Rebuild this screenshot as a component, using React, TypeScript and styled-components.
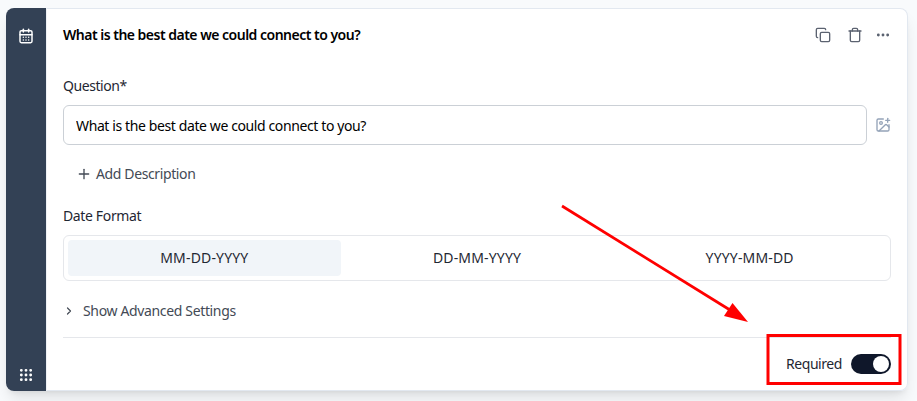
import React, { useState } from "react";
import styled, { createGlobalStyle } from "styled-components";
import { Copy, Trash, Ellipsis, ImagePlus, Plus, ChevronRight, Grip, CalendarDays } from "lucide-react";

const GlobalStyle = createGlobalStyle`
  * { box-sizing: border-box; }
  body {
    margin: 0;
    background: #f8fafc;
    font-family: "Noto Sans", sans-serif;
    font-size: 14px;
    line-height: 20px;
    color: #1f2733;
    overflow: hidden;
  }
  button, input { font: inherit; color: inherit; letter-spacing: inherit; }
`;

const Page = styled.main`
  position: relative;
  width: 917px;
  height: 401px;
  padding: 8px 9px 10px 6px;
`;

const Card = styled.section`
  display: flex;
  width: 902px;
  height: 383px;
  border-radius: 8px;
  box-shadow: 0 10px 15px -3px rgba(0, 0, 0, 0.1), 0 4px 6px -4px rgba(0, 0, 0, 0.1);
`;

const Rail = styled.aside`
  display: flex;
  flex-direction: column;
  align-items: center;
  justify-content: space-between;
  width: 40px;
  padding: 20px 0 8px;
  border-radius: 8px 0 0 8px;
  background: #334155;
  color: #fff;
  svg { display: block; }
`;

const Body = styled.div`
  flex: 1;
  display: flex;
  flex-direction: column;
  padding: 0 16px;
  border: 1px solid #e2e8f0;
  border-left-color: #eef1f5;
  border-radius: 0 8px 8px 0;
  background: #fff;
`;

const Header = styled.header`
  display: flex;
  align-items: center;
  justify-content: space-between;
  height: 52px;
`;

const Title = styled.h3`
  margin: 0;
  font-size: 14px;
  font-weight: 600;
  color: #000;
  letter-spacing: -0.51px;
`;

const Actions = styled.div`
  display: flex;
  align-items: center;
  gap: 16px;
  color: #5b6270;
  svg { display: block; }
  svg:last-child { margin-left: -4px; }
`;

const Label = styled.label<{ $track: number; $top: number }>`
  margin-top: ${(p) => p.$top}px;
  height: 20px;
  white-space: nowrap;
  letter-spacing: ${(p) => p.$track}px;
`;

const InputRow = styled.div`
  display: flex;
  align-items: center;
  gap: 8px;
  height: 40px;
  margin-top: 9px;
  color: #94a3b8;
`;

const TextInput = styled.input`
  width: 804px;
  height: 40px;
  padding: 0 12px;
  border: 1px solid #cbd0d6;
  border-radius: 6px;
  outline: none;
  background: #fff;
  color: #000;
  letter-spacing: -0.39px;
`;

const TextButton = styled.button<{ $top: number; $left: number; $gap: number; $track: number }>`
  display: flex;
  align-items: center;
  align-self: flex-start;
  gap: ${(p) => p.$gap}px;
  height: 20px;
  margin: ${(p) => p.$top}px 0 0 ${(p) => p.$left}px;
  padding: 0;
  border: 0;
  background: none;
  color: #434a55;
  letter-spacing: ${(p) => p.$track}px;
`;

const Segments = styled.div`
  display: grid;
  grid-template-columns: repeat(3, 1fr);
  width: 828px;
  height: 46px;
  margin-top: 9px;
  padding: 4px;
  border: 1px solid #e5e7eb;
  border-radius: 6px;
  letter-spacing: 0.16px;
`;

const Segment = styled.button<{ $active: boolean }>`
  padding: 0;
  border: 0;
  border-radius: 4px;
  background: ${(p) => (p.$active ? "#f1f5f9" : "transparent")};
`;

const Footer = styled.footer`
  display: flex;
  align-items: center;
  justify-content: flex-end;
  gap: 9px;
  width: 828px;
  height: 53px;
  margin-top: 16px;
  border-top: 1px solid #e5e7eb;
`;

const Toggle = styled.button<{ $on: boolean }>`
  display: flex;
  justify-content: ${(p) => (p.$on ? "flex-end" : "flex-start")};
  width: 40px;
  height: 20px;
  padding: 2px;
  border: 0;
  border-radius: 10px;
  background: ${(p) => (p.$on ? "#0f172a" : "#cbd5e1")};
`;

const Knob = styled.span`
  width: 16px;
  height: 16px;
  border-radius: 50%;
  background: #fff;
`;

const Annotation = styled.svg`
  position: absolute;
  inset: 0;
  pointer-events: none;
`;

const formats = ["MM-DD-YYYY", "DD-MM-YYYY", "YYYY-MM-DD"];

export default function App() {
  const [format, setFormat] = useState(formats[0]);
  const [required, setRequired] = useState(true);
  const [question, setQuestion] = useState("What is the best date we could connect to you?");
  return (
    <Page>
      <GlobalStyle />
      <Card>
        <Rail>
          <CalendarDays size={16} strokeWidth={2.2} />
          <Grip size={16} strokeWidth={2.3} />
        </Rail>
        <Body>
          <Header>
            <Title>{question}</Title>
            <Actions>
              <Copy size={16} strokeWidth={2} />
              <Trash size={16} strokeWidth={2} />
              <Ellipsis size={16} strokeWidth={2.3} />
            </Actions>
          </Header>
          <Label $top={15} $track={-0.43}>Question*</Label>
          <InputRow>
            <TextInput value={question} onChange={(e) => setQuestion(e.target.value)} />
            <ImagePlus size={16} strokeWidth={2} />
          </InputRow>
          <TextButton $top={19} $left={13} $gap={4} $track={-0.38}>
            <Plus size={16} strokeWidth={2} />
            Add Description
          </TextButton>
          <Label $top={22} $track={-0.36}>Date Format</Label>
          <Segments>
            {formats.map((f) => (
              <Segment key={f} $active={f === format} onClick={() => setFormat(f)}>{f}</Segment>
            ))}
          </Segments>
          <TextButton $top={20} $left={0} $gap={8} $track={-0.35}>
            <ChevronRight size={12} strokeWidth={2.4} />
            Show Advanced Settings
          </TextButton>
          <Footer>
            <Label $top={0} $track={-0.43}>Required</Label>
            <Toggle $on={required} onClick={() => setRequired(!required)}><Knob /></Toggle>
          </Footer>
        </Body>
      </Card>
      <Annotation width="917" height="401" viewBox="0 0 917 401">
        <path d="M562 206 L730 310" stroke="#f00" strokeWidth="2.7" />
        <path d="M748 322 L732.5 303 L724 316 Z" fill="#f00" />
        <rect x="768" y="335.5" width="132" height="48" fill="none" stroke="#f00" strokeWidth="3" />
      </Annotation>
    </Page>
  );
}
